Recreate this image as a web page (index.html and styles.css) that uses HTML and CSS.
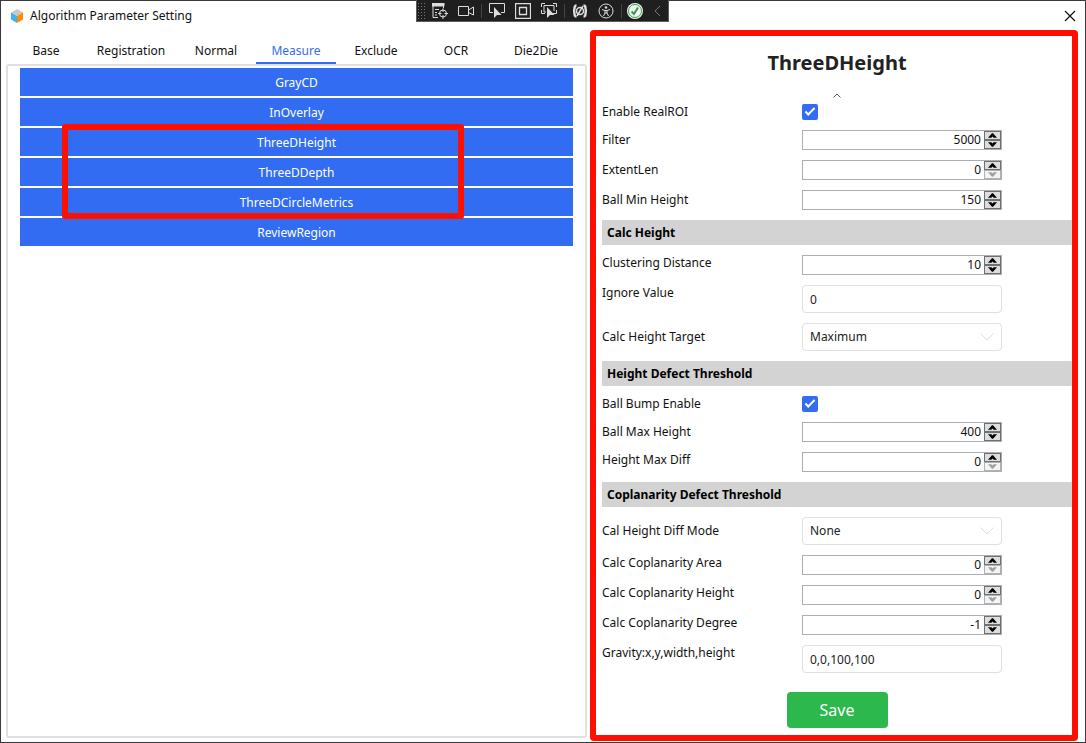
FILE: index.html
```html
<!DOCTYPE html>
<html lang="en">
  <head>
    <meta charset="UTF-8" />
    <meta name="viewport" content="width=device-width, initial-scale=1.0" />
    <title>Algorithm Parameter Setting</title>
    <link rel="stylesheet" href="styles.css">
  </head>

  <body>
    <svg class="sprite" aria-hidden="true">
      <symbol id="up" viewBox="0 0 8 4"><path d="M0 4 L3.500 0 H4.500 L8 4 H5 L4 2.800 L3 4 Z" fill="currentColor" /></symbol>
      <symbol id="down" viewBox="0 0 8 4"><path d="M0 0 L3.500 4 H4.500 L8 0 H5 L4 1.200 L3 0 Z" fill="currentColor" /></symbol>
    </svg>

    <header class="titlebar">
      <svg class="logo" viewBox="0 0 14 14">
        <path d="M7 0 L13 3.5 L7 7 L1 3.5 Z" fill="#c8c8c8" />
        <path d="M1 3.5 L7 7 V14 L1 10.5 Z" fill="#3db4f2" />
        <path d="M13 3.5 L7 7 V14 L13 10.5 Z" fill="#ff8c00" />
      </svg>
      <h1>Algorithm Parameter Setting</h1>
      <button class="close" aria-label="Close">
        <svg viewBox="0 0 12 12"><path d="M1 1 L11 11 M11 1 L1 11" stroke="#111" stroke-width="1.2" /></svg>
      </button>
    </header>

    <!-- debug toolbar on top of the window -->
    <div class="debugbar">
      <span class="grip"></span>
      <button aria-label="Live visual tree">
        <svg viewBox="0 0 16 16">
          <path d="M0 0 H12 V3 H0 Z" fill="#ddd" />
          <path d="M1 3 V14.500 H6 M3 6.500 H7 M3 9.500 H5 M3 12 H5 M11.500 3 V5" />
          <circle cx="11" cy="10.500" r="3.500" />
          <path d="M11 5.500 V9 M11 12 V16 M6 10.500 H9.500 M12.500 10.500 H16" />
        </svg>
      </button>
      <button aria-label="Record">
        <svg viewBox="0 0 16 16"><path d="M0.500 3.500 H10.500 V12.500 H0.500 Z M10.500 7 L15.500 4 V12 L10.500 9.500" /></svg>
      </button>
      <i class="sep"></i>
      <button aria-label="Select element">
        <svg viewBox="0 0 16 16">
          <path d="M4 9.500 H0.500 V0.500 H15.500 V9.500 H12" />
          <path d="M5 4 V15 L8 12 H12.500 Z" fill="#ddd" stroke="none" />
        </svg>
      </button>
      <button aria-label="Display layout adorners">
        <svg viewBox="0 0 16 16"><path d="M0.500 0.500 H15.500 V15.500 H0.500 Z M4.500 4.500 H11.500 V11.500 H4.500 Z" stroke-width="1.300" /></svg>
      </button>
      <button aria-label="Track focused element">
        <svg viewBox="0 0 16 16">
          <path d="M0.500 4 V0.500 H4 M12 0.500 H15.500 V4 M0.500 7 V10.500 H4 M15.500 7 V10.500 H12 M5 9 H3 V2.500 H13 V8" />
          <path d="M6 4 V15 L9 12 H13.500 Z" fill="#ddd" stroke="none" />
        </svg>
      </button>
      <i class="sep"></i>
      <button aria-label="Hot reload">
        <svg viewBox="0 0 16 16">
          <path d="M4.500 2.500 Q2.500 2.500 2.500 5 Q2.500 8 1 8 Q2.500 8 2.500 11 Q2.500 13.500 4.500 13.500 M11.500 2.500 Q13.500 2.500 13.500 5 Q13.500 8 15 8 Q13.500 8 13.500 11 Q13.500 13.500 11.500 13.500" stroke-width="2.400" />
          <circle cx="8" cy="8" r="3.500" stroke-width="1.500" />
          <path d="M5 13 L11 3" stroke-width="1.500" />
        </svg>
      </button>
      <button aria-label="Accessibility">
        <svg viewBox="0 0 16 16">
          <circle cx="8" cy="8" r="7" />
          <circle cx="8" cy="4.500" r="1.300" fill="#ddd" stroke="none" />
          <path d="M4 6.500 L7 7.500 H9 L12 6.500 M7 7.500 V10 L5.500 13 M9 7.500 V10 L10.500 13 M7 10 H9" />
        </svg>
      </button>
      <i class="sep"></i>
      <button class="status" aria-label="Binding failures">
        <svg viewBox="0 0 16 16">
          <circle cx="8" cy="8" r="8" fill="#f4f4f4" stroke="none" />
          <circle cx="8" cy="8" r="6.500" stroke="#35a045" />
          <path d="M4.500 8.500 L7 11 L11 4.500" stroke="#2f9e41" stroke-width="2" />
        </svg>
      </button>
      <button class="fold" aria-label="Collapse toolbar">
        <svg viewBox="0 0 16 16"><path d="M11 3 L6 8 L11 13" stroke="#777" /></svg>
      </button>
    </div>

    <main>
      <section class="left">
        <nav class="tabs">
          <button>Base</button>
          <button class="wide">Registration</button>
          <button>Normal</button>
          <button class="active">Measure</button>
          <button>Exclude</button>
          <button>OCR</button>
          <button>Die2Die</button>
        </nav>
        <div class="list">
          <button>GrayCD</button>
          <button>InOverlay</button>
          <div class="marked">
            <button>ThreeDHeight</button>
            <button>ThreeDDepth</button>
            <button>ThreeDCircleMetrics</button>
          </div>
          <button>ReviewRegion</button>
        </div>
      </section>

      <form class="params">
        <h2>ThreeDHeight</h2>
        <button type="button" class="collapse" aria-label="Collapse">
          <svg viewBox="0 0 8 5"><path d="M0.500 4.500 L4 1 L7.500 4.500" fill="none" stroke="#555" /></svg>
        </button>

        <div class="rows">
          <div class="row">
            <label for="realroi">Enable RealROI</label>
            <input type="checkbox" id="realroi" checked>
          </div>
          <div class="row">
            <label for="filter">Filter</label>
            <div class="spin">
              <input type="number" id="filter" value="5000">
              <button type="button" class="plus" aria-label="Increase"><svg><use href="#up" /></svg></button>
              <button type="button" class="minus" aria-label="Decrease"><svg><use href="#down" /></svg></button>
            </div>
          </div>
          <div class="row">
            <label for="extent">ExtentLen</label>
            <div class="spin">
              <input type="number" id="extent" value="0">
              <button type="button" class="plus" aria-label="Increase"><svg><use href="#up" /></svg></button>
              <button type="button" class="minus" aria-label="Decrease" disabled><svg><use href="#down" /></svg></button>
            </div>
          </div>
          <div class="row">
            <label for="minheight">Ball Min Height</label>
            <div class="spin">
              <input type="number" id="minheight" value="150">
              <button type="button" class="plus" aria-label="Increase"><svg><use href="#up" /></svg></button>
              <button type="button" class="minus" aria-label="Decrease"><svg><use href="#down" /></svg></button>
            </div>
          </div>

          <h3>Calc Height</h3>
          <div class="row top">
            <label for="cluster">Clustering Distance</label>
            <div class="spin">
              <input type="number" id="cluster" value="10">
              <button type="button" class="plus" aria-label="Increase"><svg><use href="#up" /></svg></button>
              <button type="button" class="minus" aria-label="Decrease"><svg><use href="#down" /></svg></button>
            </div>
          </div>
          <div class="row top">
            <label for="ignore">Ignore Value</label>
            <input type="text" class="box" id="ignore" value="0">
          </div>
          <div class="row">
            <label for="target">Calc Height Target</label>
            <div class="select">
              <select class="box" id="target"><option>Maximum</option></select>
              <svg viewBox="0 0 14 8"><path d="M0.500 0.500 L7 7 L13.500 0.500" /></svg>
            </div>
          </div>

          <h3>Height Defect Threshold</h3>
          <div class="row">
            <label for="bump">Ball Bump Enable</label>
            <input type="checkbox" id="bump" checked>
          </div>
          <div class="row">
            <label for="maxheight">Ball Max Height</label>
            <div class="spin">
              <input type="number" id="maxheight" value="400">
              <button type="button" class="plus" aria-label="Increase"><svg><use href="#up" /></svg></button>
              <button type="button" class="minus" aria-label="Decrease"><svg><use href="#down" /></svg></button>
            </div>
          </div>
          <div class="row top">
            <label for="maxdiff">Height Max Diff</label>
            <div class="spin">
              <input type="number" id="maxdiff" value="0">
              <button type="button" class="plus" aria-label="Increase"><svg><use href="#up" /></svg></button>
              <button type="button" class="minus" aria-label="Decrease" disabled><svg><use href="#down" /></svg></button>
            </div>
          </div>

          <h3>Coplanarity Defect Threshold</h3>
          <div class="row">
            <label for="mode">Cal Height Diff Mode</label>
            <div class="select">
              <select class="box" id="mode"><option>None</option></select>
              <svg viewBox="0 0 14 8"><path d="M0.500 0.500 L7 7 L13.500 0.500" /></svg>
            </div>
          </div>
          <div class="row top">
            <label for="area">Calc Coplanarity Area</label>
            <div class="spin">
              <input type="number" id="area" value="0">
              <button type="button" class="plus" aria-label="Increase"><svg><use href="#up" /></svg></button>
              <button type="button" class="minus" aria-label="Decrease" disabled><svg><use href="#down" /></svg></button>
            </div>
          </div>
          <div class="row top">
            <label for="height">Calc Coplanarity Height</label>
            <div class="spin">
              <input type="number" id="height" value="0">
              <button type="button" class="plus" aria-label="Increase"><svg><use href="#up" /></svg></button>
              <button type="button" class="minus" aria-label="Decrease" disabled><svg><use href="#down" /></svg></button>
            </div>
          </div>
          <div class="row top">
            <label for="degree">Calc Coplanarity Degree</label>
            <div class="spin">
              <input type="number" id="degree" value="-1">
              <button type="button" class="plus" aria-label="Increase"><svg><use href="#up" /></svg></button>
              <button type="button" class="minus" aria-label="Decrease"><svg><use href="#down" /></svg></button>
            </div>
          </div>
          <div class="row top">
            <label for="gravity">Gravity:x,y,width,height</label>
            <input type="text" class="box" id="gravity" value="0,0,100,100">
          </div>
        </div>

        <button type="button" class="save">Save</button>
      </form>
    </main>
  </body>
</html>
```

FILE: styles.css
```css
* {
  box-sizing: border-box;
}
body {
  margin: 0;
  min-height: 100vh;
  display: flex;
  flex-direction: column;
  border: 1px solid #3a3a3c;
  background-color: white;
  color: #111;
  font-family: "Noto Sans", sans-serif;
  font-size: 12px;
  line-height: 16px;
}
button,
input,
select {
  font: inherit;
  color: inherit;
  margin: 0;
  padding: 0;
}
button {
  border: 0;
  background: none;
}
svg {
  display: block;
}
.sprite {
  position: absolute;
  width: 0;
  height: 0;
}

/* title bar */
.titlebar {
  height: 29px;
  display: flex;
  align-items: center;
  gap: 6px;
  padding: 0 9px;
}
.titlebar h1 {
  margin: 0;
  font-size: 12px;
  font-weight: normal;
}
.logo {
  width: 14px;
  height: 14px;
}
.close {
  margin-left: auto;
}
.close svg {
  width: 12px;
  height: 12px;
}

.debugbar {
  position: absolute;
  top: 0;
  left: 50%;
  margin-left: -127px;
  height: 22px;
  display: flex;
  align-items: center;
  border: 1px solid #5c5c5c;
  border-top: 0;
  background-color: #1f1f1f;
}
.debugbar button {
  width: 26px;
  display: flex;
  justify-content: center;
}
.debugbar svg {
  width: 16px;
  height: 16px;
  fill: none;
  stroke: #ddd;
}
.debugbar .status,
.debugbar .fold {
  width: 22px;
}
.grip {
  width: 10px;
  height: 18px;
  background-image: radial-gradient(#777 25%, transparent 30%);
  background-size: 3px 3px;
}
.sep {
  width: 1px;
  height: 14px;
  margin: 0 2px;
  background-color: #444;
}

main {
  flex: 1;
  display: grid;
  grid-template-columns: 586fr 488fr;
  gap: 3px;
  padding: 0 7px 1px 0;
}

/* left side */
.left {
  display: flex;
  flex-direction: column;
  padding: 0 0 3px 5px;
}
.tabs {
  display: flex;
}
.tabs button {
  width: 80px;
  height: 34px;
  padding-top: 10px;
  border-bottom: 2px solid transparent;
}
.tabs .wide {
  width: 90px;
}
.tabs .active {
  color: #326cf3;
  border-bottom-color: #326cf3;
}
.list {
  flex: 1;
  display: flex;
  flex-direction: column;
  gap: 2px;
  padding: 2px 12px;
  border: 2px solid #e0e0e0;
  border-radius: 3px;
}
.list button {
  height: 28px;
  padding-top: 2px;
  background-color: #326cf3;
  color: white;
}
.marked {
  position: relative;
  display: flex;
  flex-direction: column;
  gap: 2px;
}
.marked::after {
  content: "";
  position: absolute;
  top: -4px;
  bottom: -3px;
  left: 42px;
  right: 109px;
  border: 6px solid #ff0f00;
  border-radius: 3px;
  pointer-events: none;
}

/* right side */
.params {
  display: flex;
  flex-direction: column;
  align-items: center;
  padding-left: 6px;
  border: 6px solid #ff0f00;
  border-radius: 4px;
}
.params h2 {
  margin: 12px 0 0;
  font-size: 20px;
  line-height: 30px;
  color: #222;
}
.collapse {
  margin: 15px 0 6px;
}
.collapse svg {
  width: 8px;
  height: 5px;
}
.rows {
  align-self: stretch;
  display: flex;
  flex-direction: column;
  gap: 10px;
}
.rows h3 {
  margin: 0;
  padding: 0 5px;
  font-size: 12px;
  line-height: 25px;
  background-color: #d3d3d3;
  color: black;
}
.row {
  display: grid;
  grid-template-columns: 200px 200px;
  align-items: center;
}
.row.top {
  align-items: start;
}
.row input[type="checkbox"] {
  appearance: none;
  display: flex;
  justify-content: center;
  width: 16px;
  height: 16px;
  padding-top: 4px;
  border-radius: 2px;
  background-color: #326cf3;
}
.row input[type="checkbox"]:checked::before {
  content: "";
  width: 8px;
  height: 3px;
  border-left: 2px solid white;
  border-bottom: 2px solid white;
  transform: rotate(-45deg);
}
.spin {
  height: 20px;
  display: grid;
  grid-template-columns: 1fr 17px;
  grid-template-rows: 9px 9px;
  border: 1px solid #abadb3;
}
.spin input {
  grid-row: 1 / 3;
  width: 100%;
  padding-right: 3px;
  border: 0;
  background: none;
  text-align: right;
  appearance: textfield;
}
.spin input::-webkit-inner-spin-button {
  appearance: none;
}
.spin button {
  grid-column: 2;
  display: flex;
  align-items: center;
  justify-content: center;
  border: 1px solid #707070;
  background-color: #ddd;
  color: black;
}
.spin .plus {
  grid-row: 1;
}
.spin button:disabled {
  border-color: #adb2b5;
  background-color: #f4f4f4;
  color: #a0a0a0;
}
.spin svg {
  width: 9px;
  height: 5px;
}
.box {
  width: 100%;
  height: 28px;
  padding: 0 7px;
  border: 1px solid #e0e0e0;
  border-radius: 4px;
  background-color: white;
  color: #222;
}
.select {
  position: relative;
}
.select select {
  display: block;
  appearance: none;
}
.select svg {
  position: absolute;
  top: 10px;
  right: 8px;
  width: 14px;
  height: 8px;
  fill: none;
  stroke: #ddd;
  pointer-events: none;
}
.save {
  width: 101px;
  height: 36px;
  margin: 19px 0 6px;
  border-radius: 4px;
  background-color: #2db84d;
  color: white;
  font-size: 16px;
}
```
